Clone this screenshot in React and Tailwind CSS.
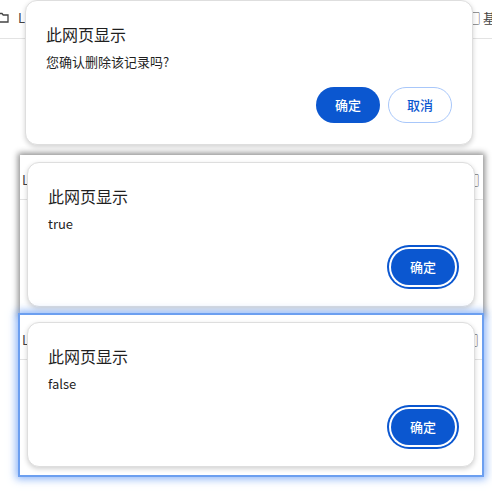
import React from "react";

const cjk = { fontFamily: '"Noto Sans CJK SC", "Noto Sans", sans-serif' };

// the page strip that peeks out behind each alert
function Strip({ tall, folder, right }) {
  return (
    <div
      className={
        "flex items-center justify-between border-b border-[#e3e3e3] text-[13px] text-[#444] " +
        (tall ? "h-[45px] pl-[2px] pr-1 pt-[6px]" : "h-[39px] pl-0 pr-0 pb-[3px]")
      }
    >
      <div className="flex items-center gap-[9px]">
        {folder && (
          <svg className="-ml-[3px]" width="12" height="11" viewBox="0 0 12 11">
            <path d="M1 1.5h4l1.2 1.5H11v7H1z" fill="none" stroke="#444" strokeWidth="1.3" />
          </svg>
        )}
        <span>L</span>
      </div>
      <span className={right ? "-mr-[4px] whitespace-nowrap" : ""}>
        ▢{right ? " 基" : ""}
      </span>
    </div>
  );
}

function Dialog({ message, cancel, focused }) {
  return (
    <div
      className="flex h-[145px] w-[448px] flex-col rounded-[12px] border border-[#dedede] bg-white px-5 pt-5 pb-[21px] shadow-[0_2px_5px_rgba(0,0,0,0.18)]"
      style={cjk}
    >
      <div className="text-[16px] leading-[26px] text-[#1f1f1f]">此网页显示</div>
      <div className="mt-[5px] text-[13px] leading-[20px] text-[#1f1f1f]">{message}</div>
      <div className="mt-auto flex justify-end gap-2">
        <button
          className={
            "h-9 w-16 rounded-full bg-[#0b57d0] text-[13px] font-medium text-white " +
            (focused ? "-mr-[1px] shadow-[0_0_0_2px_#fff,0_0_0_4px_#0b57d0]" : "")
          }
        >
          确定
        </button>
        {cancel && (
          <button className="h-9 w-16 rounded-full border border-[#a8c7fa] bg-white text-[13px] font-medium text-[#0b57d0]">
            取消
          </button>
        )}
      </div>
    </div>
  );
}

export default function App() {
  return (
    <div className="flex h-[493px] w-[492px] flex-col overflow-hidden bg-white" style={cjk}>
      <div className="relative h-[152px]">
        <Strip folder right />
        <div className="absolute left-[25px] top-0">
          <Dialog message="您确认删除该记录吗?" cancel />
        </div>
      </div>

      <div className="relative ml-5 mt-[3px] h-[160px] w-[463px] bg-white shadow-[0_0_6px_2px_rgba(0,0,0,0.45)]">
        <Strip tall />
        <div className="absolute left-[7px] top-[7px]">
          <Dialog message="true" focused />
        </div>
      </div>

      <div className="relative ml-5 h-[160px] w-[462px] bg-white shadow-[0_0_0_2px_#6c9ff0,0_0_8px_4px_rgba(110,160,245,0.8)]">
        <Strip tall />
        <div className="absolute left-[7px] top-[7px]">
          <Dialog message="false" focused />
        </div>
      </div>
    </div>
  );
}
